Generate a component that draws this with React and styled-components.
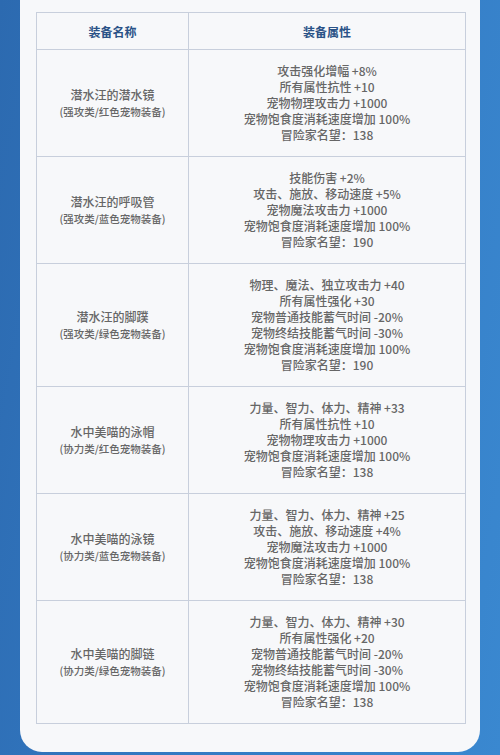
import React from 'react';
import styled, { createGlobalStyle } from 'styled-components';

const Global = createGlobalStyle`
  html, body {
    margin: 0;
    padding: 0;
  }
  body {
    width: 500px;
    height: 755px;
    overflow: hidden;
    background: linear-gradient(100deg, #2c6ab0 0%, #3277c0 40%, #3a88d0 100%);
    font-family: "Noto Sans CJK SC", "Noto Sans", sans-serif;
  }
`;

const Page = styled.div`
  width: 500px;
  height: 755px;
  box-sizing: border-box;
  padding: 0 20px 3px 20px;
  display: flex;
  flex-direction: column;
`;

const Card = styled.div`
  flex: 1;
  background: #f7f8fa;
  border-radius: 0 0 22px 22px;
  padding: 12px 15px 0 16px;
`;

const Table = styled.table`
  width: 429px;
  border-collapse: collapse;
  table-layout: fixed;

  td,
  th {
    border: 1px solid #c8cfdc;
    text-align: center;
    vertical-align: middle;
    padding: 0;
  }
`;

const Col = styled.col`
  width: ${(p) => p.w}px;
`;

const Head = styled.th`
  height: 36px;
  color: #2a5287;
  font-size: 12px;
  font-weight: 700;
`;

const NameCell = styled.td`
  color: #666;
  font-weight: 500;
`;

const Name = styled.div`
  font-size: 12px;
  line-height: 18px;
`;

const Sub = styled.div`
  font-size: 10.5px;
  line-height: 16px;
`;

const AttrCell = styled.td`
  && {
    padding: 13px 0;
  }
  color: #666;
  font-size: 12px;
  font-weight: 500;
  line-height: 16px;
`;

const rows = [
  {
    name: '潜水汪的潜水镜',
    type: '(强攻类/红色宠物装备)',
    attrs: ['攻击强化增幅 +8%', '所有属性抗性 +10', '宠物物理攻击力 +1000', '宠物饱食度消耗速度增加 100%', '冒险家名望：138'],
  },
  {
    name: '潜水汪的呼吸管',
    type: '(强攻类/蓝色宠物装备)',
    attrs: ['技能伤害 +2%', '攻击、施放、移动速度 +5%', '宠物魔法攻击力 +1000', '宠物饱食度消耗速度增加 100%', '冒险家名望：190'],
  },
  {
    name: '潜水汪的脚蹼',
    type: '(强攻类/绿色宠物装备)',
    attrs: [
      '物理、魔法、独立攻击力 +40',
      '所有属性强化 +30',
      '宠物普通技能蓄气时间 -20%',
      '宠物终结技能蓄气时间 -30%',
      '宠物饱食度消耗速度增加 100%',
      '冒险家名望：190',
    ],
  },
  {
    name: '水中美喵的泳帽',
    type: '(协力类/红色宠物装备)',
    attrs: ['力量、智力、体力、精神 +33', '所有属性抗性 +10', '宠物物理攻击力 +1000', '宠物饱食度消耗速度增加 100%', '冒险家名望：138'],
  },
  {
    name: '水中美喵的泳镜',
    type: '(协力类/蓝色宠物装备)',
    attrs: ['力量、智力、体力、精神 +25', '攻击、施放、移动速度 +4%', '宠物魔法攻击力 +1000', '宠物饱食度消耗速度增加 100%', '冒险家名望：138'],
  },
  {
    name: '水中美喵的脚链',
    type: '(协力类/绿色宠物装备)',
    attrs: [
      '力量、智力、体力、精神 +30',
      '所有属性强化 +20',
      '宠物普通技能蓄气时间 -20%',
      '宠物终结技能蓄气时间 -30%',
      '宠物饱食度消耗速度增加 100%',
      '冒险家名望：138',
    ],
  },
];

const App = () => (
  <Page>
    <Global />
    <Card>
      <Table>
        <colgroup>
          <Col w={152} />
          <Col w={277} />
        </colgroup>
        <thead>
          <tr>
            <Head>装备名称</Head>
            <Head>装备属性</Head>
          </tr>
        </thead>
        <tbody>
          {rows.map((r) => (
            <tr key={r.name}>
              <NameCell>
                <Name>{r.name}</Name>
                <Sub>{r.type}</Sub>
              </NameCell>
              <AttrCell>
                {r.attrs.map((a) => (
                  <div key={a}>{a}</div>
                ))}
              </AttrCell>
            </tr>
          ))}
        </tbody>
      </Table>
    </Card>
  </Page>
);

export default App;
